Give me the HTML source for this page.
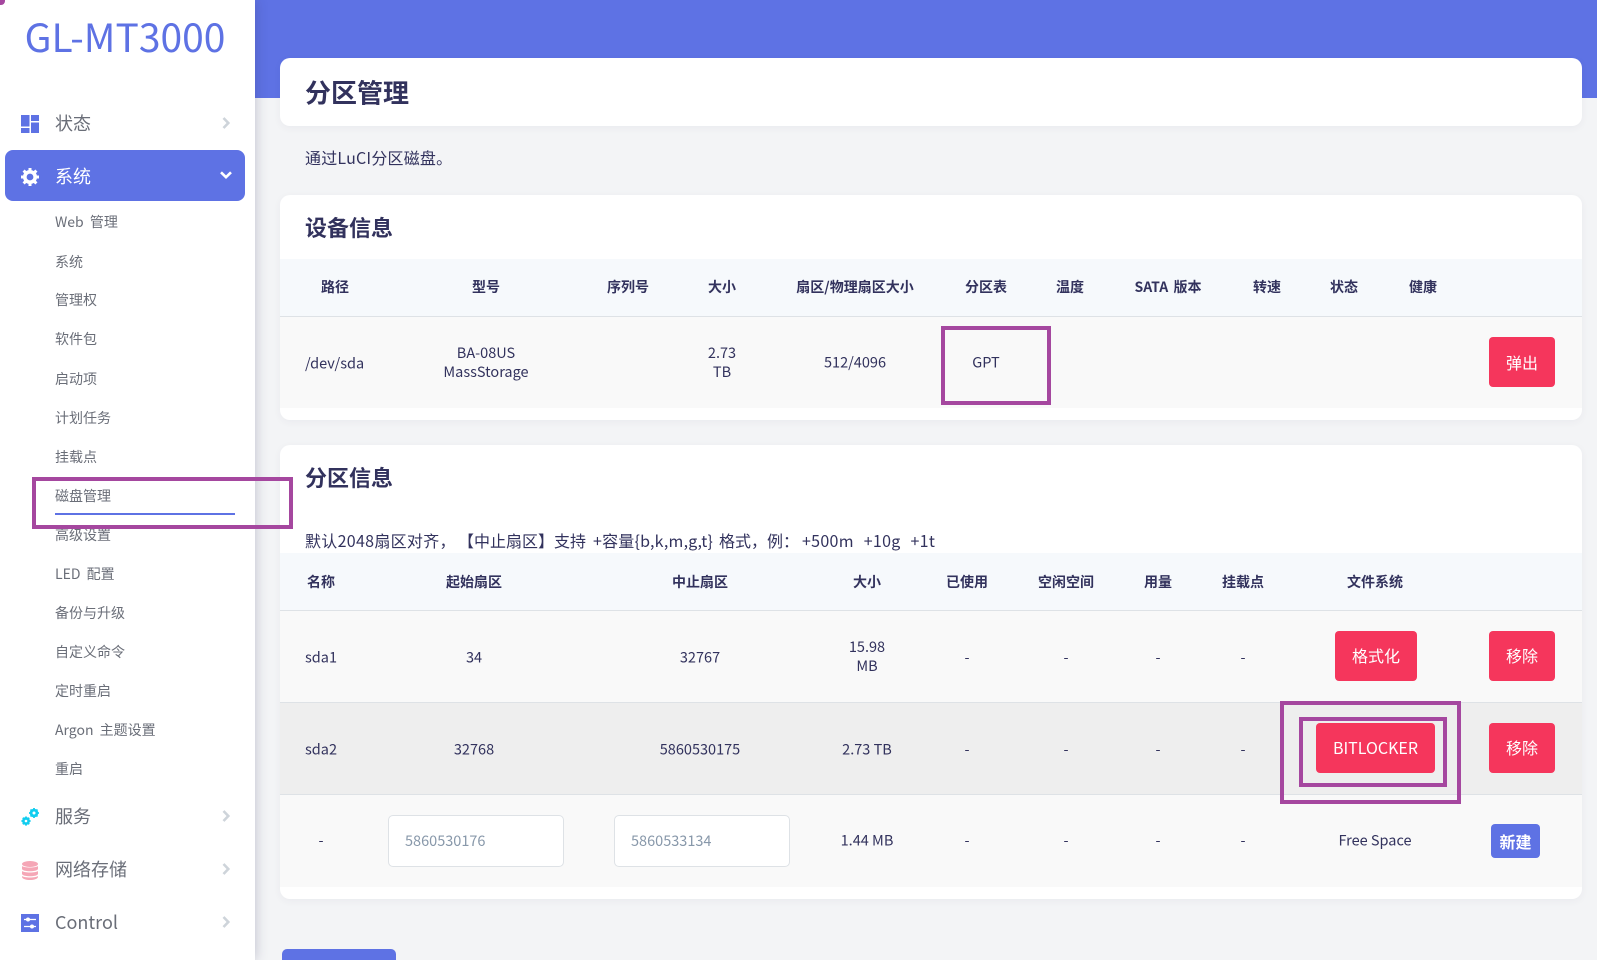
<!DOCTYPE html>
<html lang="zh-CN">
<head>
<meta charset="utf-8">
<title>分区管理</title>
<style>
html,body{margin:0;padding:0;width:1597px;height:960px;overflow:hidden}
body{background:#f3f4f6;font-family:"Noto Sans CJK SC","Liberation Sans",sans-serif;color:#32325d;text-spacing-trim:space-all}
#wrap{position:relative;width:1597px;height:960px;overflow:hidden}
.b{position:absolute}
.c{position:absolute;transform:translate(-50%,-50%);white-space:nowrap;text-align:center}
.l{position:absolute;transform:translateY(-50%);white-space:nowrap}
#hdr{left:255px;top:0;width:1342px;height:98px;background:#5e72e4}
#side{left:0;top:0;width:255px;height:960px;background:#fff;box-shadow:0 0 12px rgba(50,50,93,.28)}
.card{position:absolute;left:280px;width:1302px;background:#fff;border-radius:10px;box-shadow:0 2px 8px rgba(50,50,93,.05)}
.m{font-size:18px;color:#6a6e78;left:55px}
.s{font-size:14px;color:#6a6e78;left:55px;word-spacing:3px}
.th{font-size:14px;font-weight:700;color:#32325d;word-spacing:2px}
.td{font-size:14.5px;color:#32325d;margin-top:1px}
.h2{font-size:22px;font-weight:700;left:305px;color:#32325d}
.btn{position:absolute;box-sizing:border-box;padding-bottom:1px;background:#f5365c;border-radius:4px;color:#fff;font-size:16px;display:flex;align-items:center;justify-content:center;height:50px}
.up{padding-bottom:3px}
.box{position:absolute;border:4px solid #a5479f;box-sizing:border-box}
.inp{position:absolute;box-sizing:border-box;height:52px;width:176px;top:815px;background:#fff;border:1px solid #dee2e6;border-radius:5px;color:#8898aa;font-size:14.5px;line-height:50px;padding-left:16px}
.p{font-size:16px;top:540px}
svg{position:absolute;overflow:visible}
</style>
</head>
<body>
<div id="wrap">
<div class="b" id="hdr"></div>
<div class="b" id="side"></div>

<div class="b" style="left:0;top:0;width:5px;height:5px;background:#a5479f;border-radius:0 0 4px 0"></div>
<div class="c" style="left:125px;top:36px;font-size:39px;color:#5e72e4">GL-MT3000</div>

<!-- menu -->
<svg style="left:21px;top:115px" width="18" height="18" viewBox="0 0 18 18" fill="#5e72e4"><rect x="0" y="0" width="8.5" height="11.5"/><rect x="0" y="13" width="8.5" height="5"/><rect x="10" y="0" width="8" height="6"/><rect x="10" y="7.5" width="8" height="10.5"/></svg>
<div class="l m" style="top:123px">状态</div>
<svg style="left:222px;top:117px" width="8" height="12" viewBox="0 0 8 12" fill="none" stroke="#ced4da" stroke-width="2.6"><path d="M1.5 1L6.3 6L1.5 11"/></svg>

<div class="b" style="left:5px;top:150px;width:240px;height:51px;background:#5e72e4;border-radius:8px"></div>
<svg style="left:21px;top:168px" width="18" height="18" viewBox="0 0 18 18"><circle cx="9" cy="9" r="5.2" fill="none" stroke="#fff" stroke-width="3.6"/><g stroke="#fff" stroke-width="3"><path d="M9 0V3M9 15V18M0 9H3M15 9H18M2.6 2.6L4.7 4.7M13.3 13.3L15.4 15.4M2.6 15.4L4.7 13.3M13.3 4.7L15.4 2.6"/></g></svg>
<div class="l m" style="top:176px;color:#fff">系统</div>
<svg style="left:220px;top:171px" width="12" height="8" viewBox="0 0 12 8" fill="none" stroke="#fff" stroke-width="2.6"><path d="M1 1.3L6 6.2L11 1.3"/></svg>

<div class="l s" style="top:222px">Web 管理</div>
<div class="l s" style="top:262px">系统</div>
<div class="l s" style="top:300px">管理权</div>
<div class="l s" style="top:339px">软件包</div>
<div class="l s" style="top:379px">启动项</div>
<div class="l s" style="top:418px">计划任务</div>
<div class="l s" style="top:457px">挂载点</div>
<div class="l s" style="top:496px">磁盘管理</div>
<div class="b" style="left:55px;top:513px;width:180px;height:2px;background:#5e72e4"></div>
<div class="l s" style="top:535px">高级设置</div>
<div class="l s" style="top:574px">LED 配置</div>
<div class="l s" style="top:613px">备份与升级</div>
<div class="l s" style="top:652px">自定义命令</div>
<div class="l s" style="top:691px">定时重启</div>
<div class="l s" style="top:730px">Argon 主题设置</div>
<div class="l s" style="top:769px">重启</div>

<svg style="left:21px;top:808px" width="18" height="18" viewBox="0 0 18 18" fill="none" stroke="#11cdef"><circle cx="5" cy="13" r="2.6" stroke-width="2.6"/><circle cx="13" cy="5" r="2.9" stroke-width="2.8"/><path stroke-width="1.8" d="M5 8.5V10M5 16V17.6M.4 13H2M8 13H9.6M1.8 9.8L2.9 10.9M7.1 15.1L8.2 16.2M1.8 16.2L2.9 15.1M7.1 10.9L8.2 9.8M13 0V2M13 8V10M8 5H10M16 5H18M9.5 1.5L10.9 2.9M15.1 7.1L16.5 8.5M9.5 8.5L10.9 7.1M15.1 2.9L16.5 1.5"/></svg>
<div class="l m" style="top:816px">服务</div>
<svg style="left:222px;top:810px" width="8" height="12" viewBox="0 0 8 12" fill="none" stroke="#ced4da" stroke-width="2.6"><path d="M1.5 1L6.3 6L1.5 11"/></svg>

<svg style="left:22px;top:861px" width="16" height="19" viewBox="0 0 16 19" fill="#f5a6b6"><ellipse cx="8" cy="3" rx="8" ry="3"/><path d="M0 5c2 2 14 2 16 0v3c-1 3-15 3-16 0zM0 10c2 2 14 2 16 0v3c-1 3-15 3-16 0zM0 15c2 2 14 2 16 0v1c-1 4-15 4-16 0z"/></svg>
<div class="l m" style="top:869px">网络存储</div>
<svg style="left:222px;top:863px" width="8" height="12" viewBox="0 0 8 12" fill="none" stroke="#ced4da" stroke-width="2.6"><path d="M1.5 1L6.3 6L1.5 11"/></svg>

<svg style="left:21px;top:914px" width="18" height="18" viewBox="0 0 18 18"><rect width="18" height="18" fill="#5e72e4"/><path d="M3 5.5H15M3 12.5H15" stroke="#fff" stroke-width="1.3"/><circle cx="7" cy="5.5" r="2" fill="#fff"/><circle cx="11" cy="12.5" r="2" fill="#fff"/></svg>
<div class="l m" style="top:922px">Control</div>
<svg style="left:222px;top:916px" width="8" height="12" viewBox="0 0 8 12" fill="none" stroke="#ced4da" stroke-width="2.6"><path d="M1.5 1L6.3 6L1.5 11"/></svg>

<!-- card 1 -->
<div class="card" style="top:58px;height:68px"></div>
<div class="l" style="left:305px;top:92px;font-size:26px;font-weight:700">分区管理</div>
<div class="l" style="left:305px;top:157px;font-size:16px;letter-spacing:.2px">通过LuCI分区磁盘。</div>

<!-- card 2 -->
<div class="card" style="top:195px;height:225px"></div>
<div class="l h2" style="top:227px">设备信息</div>
<div class="b" style="left:280px;top:259px;width:1302px;height:58px;background:#f6f9fc;border-bottom:1px solid #dee2e6;box-sizing:border-box"></div>
<div class="b" style="left:280px;top:317px;width:1302px;height:91px;background:#f9f9f9"></div>
<div class="c th" style="left:335px;top:287px">路径</div>
<div class="c th" style="left:486px;top:287px">型号</div>
<div class="c th" style="left:628px;top:287px">序列号</div>
<div class="c th" style="left:722px;top:287px">大小</div>
<div class="c th" style="left:855px;top:287px">扇区/物理扇区大小</div>
<div class="c th" style="left:986px;top:287px">分区表</div>
<div class="c th" style="left:1070px;top:287px">温度</div>
<div class="c th" style="left:1168px;top:287px">SATA 版本</div>
<div class="c th" style="left:1267px;top:287px">转速</div>
<div class="c th" style="left:1344px;top:287px">状态</div>
<div class="c th" style="left:1423px;top:287px">健康</div>
<div class="l td" style="left:305px;top:362px">/dev/sda</div>
<div class="c td" style="left:486px;top:362px;line-height:19px;margin-top:0">BA-08US<br>MassStorage</div>
<div class="c td" style="left:722px;top:362px;line-height:19px;margin-top:0">2.73<br>TB</div>
<div class="c td" style="left:855px;top:362px;margin-top:0">512/4096</div>
<div class="c td" style="left:986px;top:362px;margin-top:0">GPT</div>
<div class="btn" style="left:1489px;top:337px;width:66px">弹出</div>
<div class="box" style="left:941px;top:326px;width:110px;height:79px"></div>

<!-- card 3 -->
<div class="card" style="top:445px;height:454px"></div>
<div class="l h2" style="top:477px">分区信息</div>
<div class="l p" style="left:305px;letter-spacing:.3px">默认2048扇区对齐，</div>
<div class="l p" style="left:458px">【中止扇区】支持</div>
<div class="l p" style="left:593px;letter-spacing:.2px">+容量{b,k,m,g,t}</div>
<div class="l p" style="left:719px">格式，例：</div>
<div class="l p" style="left:802px;word-spacing:6px;letter-spacing:.3px">+500m +10g +1t</div>
<div class="b" style="left:280px;top:553px;width:1302px;height:58px;background:#f6f9fc;border-bottom:1px solid #dee2e6;box-sizing:border-box"></div>
<div class="b" style="left:280px;top:611px;width:1302px;height:91px;background:#f9f9f9;border-bottom:1px solid #dee2e6"></div>
<div class="b" style="left:280px;top:703px;width:1302px;height:91px;background:#eeeeee;border-bottom:1px solid #dee2e6"></div>
<div class="b" style="left:280px;top:795px;width:1302px;height:92px;background:#f9f9f9"></div>

<div class="c th" style="left:321px;top:582px">名称</div>
<div class="c th" style="left:474px;top:582px">起始扇区</div>
<div class="c th" style="left:700px;top:582px">中止扇区</div>
<div class="c th" style="left:867px;top:582px">大小</div>
<div class="c th" style="left:967px;top:582px">已使用</div>
<div class="c th" style="left:1066px;top:582px">空闲空间</div>
<div class="c th" style="left:1158px;top:582px">用量</div>
<div class="c th" style="left:1243px;top:582px">挂载点</div>
<div class="c th" style="left:1375px;top:582px">文件系统</div>

<div class="l td" style="left:305px;top:656px">sda1</div>
<div class="c td" style="left:474px;top:656px">34</div>
<div class="c td" style="left:700px;top:656px">32767</div>
<div class="c td" style="left:867px;top:656px;line-height:19px;margin-top:0">15.98<br>MB</div>
<div class="c td" style="left:967px;top:656px">-</div>
<div class="c td" style="left:1066px;top:656px">-</div>
<div class="c td" style="left:1158px;top:656px">-</div>
<div class="c td" style="left:1243px;top:656px">-</div>
<div class="btn up" style="left:1335px;top:631px;width:82px">格式化</div>
<div class="btn up" style="left:1489px;top:631px;width:66px">移除</div>

<div class="l td" style="left:305px;top:748px">sda2</div>
<div class="c td" style="left:474px;top:748px">32768</div>
<div class="c td" style="left:700px;top:748px">5860530175</div>
<div class="c td" style="left:867px;top:748px">2.73 TB</div>
<div class="c td" style="left:967px;top:748px">-</div>
<div class="c td" style="left:1066px;top:748px">-</div>
<div class="c td" style="left:1158px;top:748px">-</div>
<div class="c td" style="left:1243px;top:748px">-</div>
<div class="btn up" style="left:1316px;top:723px;width:119px">BITLOCKER</div>
<div class="btn up" style="left:1489px;top:723px;width:66px">移除</div>

<div class="c td" style="left:321px;top:839px">-</div>
<div class="inp" style="left:388px">5860530176</div>
<div class="inp" style="left:614px">5860533134</div>
<div class="c td" style="left:867px;top:839px">1.44 MB</div>
<div class="c td" style="left:967px;top:839px">-</div>
<div class="c td" style="left:1066px;top:839px">-</div>
<div class="c td" style="left:1158px;top:839px">-</div>
<div class="c td" style="left:1243px;top:839px">-</div>
<div class="c td" style="left:1375px;top:839px">Free Space</div>
<div class="btn" style="left:1491px;top:824px;width:49px;height:34px;background:#5e72e4;font-weight:700">新建</div>

<div class="box" style="left:1280px;top:701px;width:181px;height:103px"></div>
<div class="box" style="left:1299px;top:717px;width:148px;height:70px"></div>
<div class="box" style="left:32px;top:477px;width:261px;height:52px"></div>

<div class="b" style="left:282px;top:949px;width:114px;height:11px;background:#5e72e4;border-radius:5px 5px 0 0"></div>
</div>
</body>
</html>
